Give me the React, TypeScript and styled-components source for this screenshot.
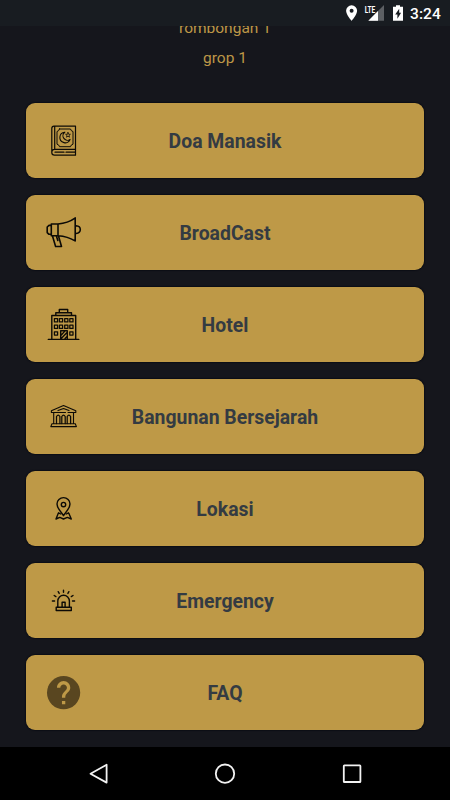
import React from "react";
import styled, { createGlobalStyle } from "styled-components";

const GlobalStyle = createGlobalStyle`
  body { margin: 0; background: #15161c; }
  * { box-sizing: border-box; }
`;

const Screen = styled.div`
  width: 450px;
  height: 800px;
  display: flex;
  flex-direction: column;
  overflow: hidden;
  background: #15161c;
  font-family: Roboto, sans-serif;
`;

const StatusBar = styled.header`
  height: 26px;
  flex: none;
  display: flex;
  justify-content: flex-end;
  background: #181c21;
`;

const StatusIcons = styled.svg`
  width: 66px;
  height: 26px;
  flex: none;
`;

const Clock = styled.time`
  width: 40px;
  color: #fff;
  font-size: 15.5px;
  font-weight: 500;
  line-height: 28px;
  letter-spacing: 0.1px;
`;

const Content = styled.main`
  flex: 1;
  min-height: 0;
  overflow: hidden;
  display: flex;
  flex-direction: column;
`;

const GroupInfo = styled.div`
  height: 77px;
  flex: none;
  color: #bd9747;
  font-size: 15.5px;
  line-height: 30px;
  text-align: center;
`;

const InfoLine = styled.p`
  margin: 0;
  &:first-child { margin-top: -13px; }
`;

const Menu = styled.nav`
  display: flex;
  flex-direction: column;
  gap: 17px;
  padding: 0 26px;
`;

const MenuButton = styled.button`
  display: grid;
  grid-template-columns: 40px 1fr 40px;
  align-items: center;
  height: 75px;
  padding: 0 18px;
  border: 0;
  border-radius: 9px;
  background: #be9947;
  box-shadow: 0 0 1px 1px #0c0e16;
  font-family: inherit;
`;

const MenuIcon = styled.svg<{ $weight?: number }>`
  width: 40px;
  height: 40px;
  fill: none;
  stroke: #0c0a06;
  stroke-width: ${({ $weight = 1.4 }) => $weight};
  stroke-linejoin: round;
  stroke-linecap: round;
`;

const Label = styled.span`
  color: #343b42;
  font-size: 19.4px;
  font-weight: 700;
  line-height: 24px;
  text-align: center;
  padding-top: 2px;
`;

const NavBar = styled.footer`
  height: 53px;
  flex: none;
  display: grid;
  grid-template-columns: repeat(3, 126.5px);
  justify-content: center;
  justify-items: center;
  background: #000;
`;

const NavIcon = styled.svg`
  width: 24px;
  height: 53px;
  fill: none;
  stroke: #f2f2f2;
  stroke-width: 1.8;
  stroke-linejoin: round;
`;

const BookIcon = () => (
  <MenuIcon viewBox="0 0 40 40">
    <path d="M31.5 5.2H10Q7.8 5.2 7.8 7.5V31.5Q7.8 34.2 10.5 34.2H31.5V5.2M10.7 5.5V28.2M7.8 31Q8 28.4 10.5 28.4H31M11 31.2H20M22 31.2H31" strokeWidth="1.2" />
    <path d="M15.5 8H26.5Q27 10.2 29 10.5V23.2Q27 23.5 26.5 25.7H15.5Q15 23.5 13 23.2V10.5Q15 10.2 15.5 8Z" strokeWidth="1" />
    <path d="M20.8 11.2A5.3 5.3 0 1 0 26.1 18.4A4.3 4.3 0 1 1 20.8 11.2Z" strokeWidth="1.1" />
    <path d="M24 11.5L24.6 13.2L26.4 13.3L25 14.5L25.5 16.2L24 15.2L22.5 16.2L23 14.5L21.6 13.3L23.4 13.2Z" strokeWidth="0.8" />
  </MenuIcon>
);

const MegaphoneIcon = () => (
  <MenuIcon viewBox="0 0 40 40" $weight={1.6}>
    <path d="M7.3 11H14V22.7H7.3ZM7.3 12.4H5L3.2 14V19.6L5 21.3H7.3M14 11Q24 10 30.6 5.3M14 22.7Q24 23.5 30.6 27.6M31.2 4.9V27.9M32 12.7Q36.3 13 36.3 16.4T32 20.5M8.5 23L11.6 33.5H17.5L14.5 23M12.4 23L13.8 27.5" />
  </MenuIcon>
);

const HotelIcon = () => (
  <MenuIcon viewBox="0 0 40 40">
    <path d="M4.3 34.4H34.8M7.8 34.3V10.5H31.7V34.3M11.8 10.3V7.8H27.5V10.3M15.3 7.5V4.5H23.7V7.5M16.7 34V25.7H23.3V34M17.3 30L20.6 26.4M17.2 33.5L23 27.6M21 33.5L23 31.5" />
    {[12, 17, 22.3, 27.4].map((x) =>
      [15.2, 21.7, 28.4]
        .filter((y) => y < 28 || x < 13 || x > 27)
        .map((y) => <rect key={`${x}-${y}`} x={x - 1.6} y={y - 1.6} width="3.2" height="3.3" strokeWidth="1.25" />)
    )}
  </MenuIcon>
);

const MuseumIcon = () => (
  <MenuIcon viewBox="0 0 40 40">
    <path d="M7.4 15.5V13.7L19.5 8.6L31.8 13.7V15.5H24M21.5 15.5H7.4M14 13.6L19.5 11.5L25 13.6M9.7 15.7V26.7M29.5 15.7V26.7M8 26.7H31.3L32.4 29.6H6.8Z" strokeWidth="1.1" />
    <path d="M12.5 26.5V19.5Q14.2 16.7 15.9 19.5V26.5M17.8 26.5V19.5Q19.5 16.7 21.2 19.5V26.5M23.2 26.5V19.5Q24.9 16.7 26.6 19.5V26.5" strokeWidth="1.25" />
  </MenuIcon>
);

const LocationIcon = () => (
  <MenuIcon viewBox="0 0 40 40">
    <path d="M19.5 26.7C17.6 23.2 13 19.6 13 14.9A6.5 6.3 0 0 1 26 14.9C26 19.6 21.4 23.2 19.5 26.7Z" />
    <circle cx="19.5" cy="15.6" r="2.2" />
    <path d="M14.3 24.2L12 30L15.8 28.4L19.5 30L23.3 28.4L27.3 30L24.8 24.2M14.5 23.8L16.7 25M24.5 23.8L22.3 25" />
  </MenuIcon>
);

const SirenIcon = () => (
  <MenuIcon viewBox="0 0 40 40">
    <path d="M12.2 26.3H27.3V29.5H12.2ZM13.8 26V20A5.8 5.8 0 0 1 25.4 20V26M18.1 26V21.2H21.1V26M19.5 9.3V11.3M14.2 10.7L15.2 12.4M24.9 10.7L23.9 12.4M10.2 14.5L11.9 15.6M29 14.5L27.3 15.6M8.4 20H10.6M28.5 20H30.6" />
  </MenuIcon>
);

const HelpIcon = () => (
  <MenuIcon viewBox="0 0 40 40">
    <circle cx="19.6" cy="19.7" r="16.6" fill="#594620" stroke="none" />
    <path
      transform="translate(-0.3 -0.2) scale(1.66)"
      fill="#be9947"
      stroke="none"
      d="M11 19h2v-2h-2zM15.07 11.25l-.9.92C13.45 12.9 13 13.5 13 15h-2v-.5c0-1.1.45-2.1 1.17-2.83l1.24-1.26c.37-.36.59-.86.59-1.41 0-1.1-.9-2-2-2s-2 .9-2 2H8c0-2.21 1.79-4 4-4s4 1.79 4 4c0 .88-.36 1.68-.93 2.25z"
    />
  </MenuIcon>
);

const items = [
  { label: "Doa Manasik", Icon: BookIcon },
  { label: "BroadCast", Icon: MegaphoneIcon },
  { label: "Hotel", Icon: HotelIcon },
  { label: "Bangunan Bersejarah", Icon: MuseumIcon },
  { label: "Lokasi", Icon: LocationIcon },
  { label: "Emergency", Icon: SirenIcon },
  { label: "FAQ", Icon: HelpIcon },
];

export default function App() {
  return (
    <Screen>
      <GlobalStyle />
      <StatusBar>
        <StatusIcons viewBox="344 0 66 26">
          <path fill="#fff" fillRule="evenodd" d="M351.6 5.3A5.5 5.5 0 0 0 346.1 10.8C346.1 14.7 351.6 20.9 351.6 20.9S357.1 14.7 357.1 10.8A5.5 5.5 0 0 0 351.6 5.3ZM351.6 8.8A2 2 0 1 1 351.6 12.8A2 2 0 0 1 351.6 8.8Z" />
          <path fill="#5d6064" d="M384 5V20.8H368.3Z" />
          <path fill="#fff" d="M378 11V20.8H368.3Z" />
          <path fill="#181c21" d="M364 4H376V13H364Z" />
          <text x="364.7" y="12.7" fill="#fff" fontFamily="Roboto, sans-serif" fontSize="9" fontWeight="700" textLength="10.6" lengthAdjust="spacingAndGlyphs">LTE</text>
          <path fill="#fff" fillRule="evenodd" d="M396 5.3H400V6.8H403V20.8H393V6.8H396ZM399.2 8.8L395.2 14.5H397.4V18.8L401.1 12.8H399.2Z" />
        </StatusIcons>
        <Clock>3:24</Clock>
      </StatusBar>
      <Content>
        <GroupInfo>
          <InfoLine>rombongan 1</InfoLine>
          <InfoLine>grop 1</InfoLine>
        </GroupInfo>
        <Menu>
          {items.map(({ label, Icon }) => (
            <MenuButton key={label}>
              <Icon />
              <Label>{label}</Label>
            </MenuButton>
          ))}
        </Menu>
      </Content>
      <NavBar>
        <NavIcon viewBox="0 0 24 53"><path d="M19.6 17.8V35.6L3.5 26.7Z" /></NavIcon>
        <NavIcon viewBox="0 0 24 53"><circle cx="12" cy="26.7" r="9.2" /></NavIcon>
        <NavIcon viewBox="0 0 24 53"><rect x="3.8" y="18.4" width="16.6" height="16.6" rx="0.6" /></NavIcon>
      </NavBar>
    </Screen>
  );
}
